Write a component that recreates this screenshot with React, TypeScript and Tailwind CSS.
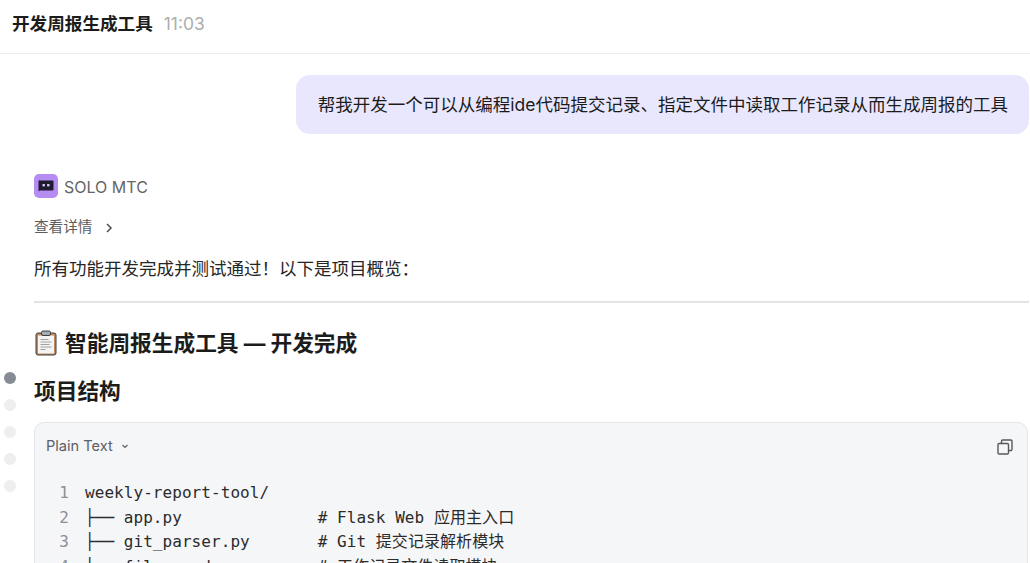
const sans = { fontFamily: '"Inter", "Noto Sans CJK SC", sans-serif' };

const codeLines = [
  "weekly-report-tool/",
  "├── app.py              # Flask Web 应用主入口",
  "├── git_parser.py       # Git 提交记录解析模块",
  "├── file_reader.py      # 工作记录文件读取模块",
];

function ClipboardIcon() {
  return (
    <svg width="24" height="26" viewBox="0 0 24 26" className="shrink-0">
      <rect x="2" y="3" width="20" height="22" rx="2" fill="#c08a5e" stroke="#3f3f3f" strokeWidth="1" />
      <rect x="4" y="5.5" width="16" height="18" fill="#f4f4f4" />
      <rect x="7.5" y="1" width="9" height="4.5" rx="1.5" fill="#a3adb3" stroke="#3f3f3f" strokeWidth="1" />
      <path d="M6.5 9.5h8M6.5 12h11M6.5 14.5h9M6.5 17h11M6.5 19.5h5" stroke="#a0a0a0" strokeWidth="1" />
    </svg>
  );
}

function BotIcon() {
  return (
    <div className="flex h-6 w-6 items-center justify-center rounded-[5px] bg-[#b48cf2]">
      <svg width="16" height="12" viewBox="0 0 16 12">
        <path d="M2 0.5h12.5a1 1 0 0 1 1 1v8a1 1 0 0 1-1 1H2l-1.5 1v-10a1 1 0 0 1 1.5-1z" fill="#1f1b2e" />
        <rect x="4.5" y="4" width="2.4" height="2.4" fill="#d8c6f8" />
        <rect x="9.1" y="4" width="2.4" height="2.4" fill="#d8c6f8" />
      </svg>
    </div>
  );
}

export default function App() {
  return (
    <div className="relative h-[563px] w-[1030px] overflow-hidden bg-white text-[#1a1a1a]" style={sans}>
      <header className="flex h-[54px] items-center gap-[11px] border-b border-[#ebebeb] pb-[5px] pl-3">
        <span className="text-[17.6px] font-bold text-[#1c1c1c]">开发周报生成工具</span>
        <span className="text-[17.4px] text-[#adadad]">11:03</span>
      </header>

      <main className="pl-[34px] pr-px">
        <div className="mt-[21px] flex justify-end">
          <div className="flex h-[59px] items-center rounded-[14px] bg-[#e9e7fd] pb-px pl-[22px] pr-[21px] pt-[2px] text-[17.5px] text-[#1c1c1c]">
            帮我开发一个可以从编程ide代码提交记录、指定文件中读取工作记录从而生成周报的工具
          </div>
        </div>

        <div className="mt-10 flex h-6 items-center gap-[6px]">
          <BotIcon />
          <span className="h-6 text-[16px] leading-[26px] text-[#666666]">SOLO MTC</span>
        </div>

        <div className="mt-[20px] flex h-5 items-center gap-[9px] text-[14.6px] text-[#5c5c5c]">
          <span>查看详情</span>
          <svg width="16" height="16" viewBox="0 0 16 16" fill="none" stroke="#4f4f4f" strokeWidth="1.5">
            <path d="M6 4l4 4-4 4" />
          </svg>
        </div>

        <p className="mt-[16px] h-[29px] text-[17.5px] leading-[29px] text-[#262626]">所有功能开发完成并测试通过！以下是项目概览：</p>

        <hr className="mt-[18px] border-0 border-t-2 border-[#e4e4e4]" />

        <h2 className="mt-[24px] flex h-[32px] items-center gap-[7px] text-[21.7px] font-bold text-[#1c1c1c]">
          <ClipboardIcon />
          <span>智能周报生成工具 — 开发完成</span>
        </h2>

        <h3 className="mt-[16px] h-[32px] text-[21.7px] font-bold leading-[32px] text-[#1c1c1c]">项目结构</h3>

        <section className="mt-[15px] mr-px rounded-[10px] border border-[#e3e5ea] bg-[#f5f6f8]">
          <div className="flex h-[47px] items-center justify-between pl-[11px] pr-[14px]">
            <div className="flex items-center gap-[7px] text-[14.6px] text-[#5c5f66]">
              <span>Plain Text</span>
              <svg width="10" height="10" viewBox="0 0 10 10" fill="none" stroke="#5c5f66" strokeWidth="1.2">
                <path d="M2.5 4l2.5 2.5L7.5 4" />
              </svg>
            </div>
            <svg width="16" height="16" viewBox="0 0 16 16" fill="none" stroke="#55585e" strokeWidth="1.4">
              <rect x="1" y="4.5" width="10.5" height="10.5" rx="1.2" />
              <path d="M4.5 4.5V2.2A1.2 1.2 0 0 1 5.7 1h8.1A1.2 1.2 0 0 1 15 2.2v8.1a1.2 1.2 0 0 1-1.2 1.2h-2.3" />
            </svg>
          </div>
          <div className="mt-[11px]">
            {codeLines.map((line, i) => (
              <div key={i} className="flex h-[24.5px] items-center text-[16px] leading-[24.5px] tracking-[0.06px]" style={{ fontFamily: '"DejaVu Sans Mono", "Noto Sans CJK SC", monospace' }}>
                <span className="w-[34px] shrink-0 text-right text-[#8b8f96]">{i + 1}</span>
                <span className="ml-4 whitespace-pre text-[#2b2b2b]">{line}</span>
              </div>
            ))}
          </div>
        </section>
      </main>

      <div className="absolute left-[4px] top-[372px] flex flex-col gap-[15px]">
        <span className="h-3 w-3 rounded-full bg-[#878b93]" />
        <span className="h-3 w-3 rounded-full bg-[#eeeeee]" />
        <span className="h-3 w-3 rounded-full bg-[#eeeeee]" />
        <span className="h-3 w-3 rounded-full bg-[#eeeeee]" />
        <span className="h-3 w-3 rounded-full bg-[#eeeeee]" />
      </div>
    </div>
  );
}
